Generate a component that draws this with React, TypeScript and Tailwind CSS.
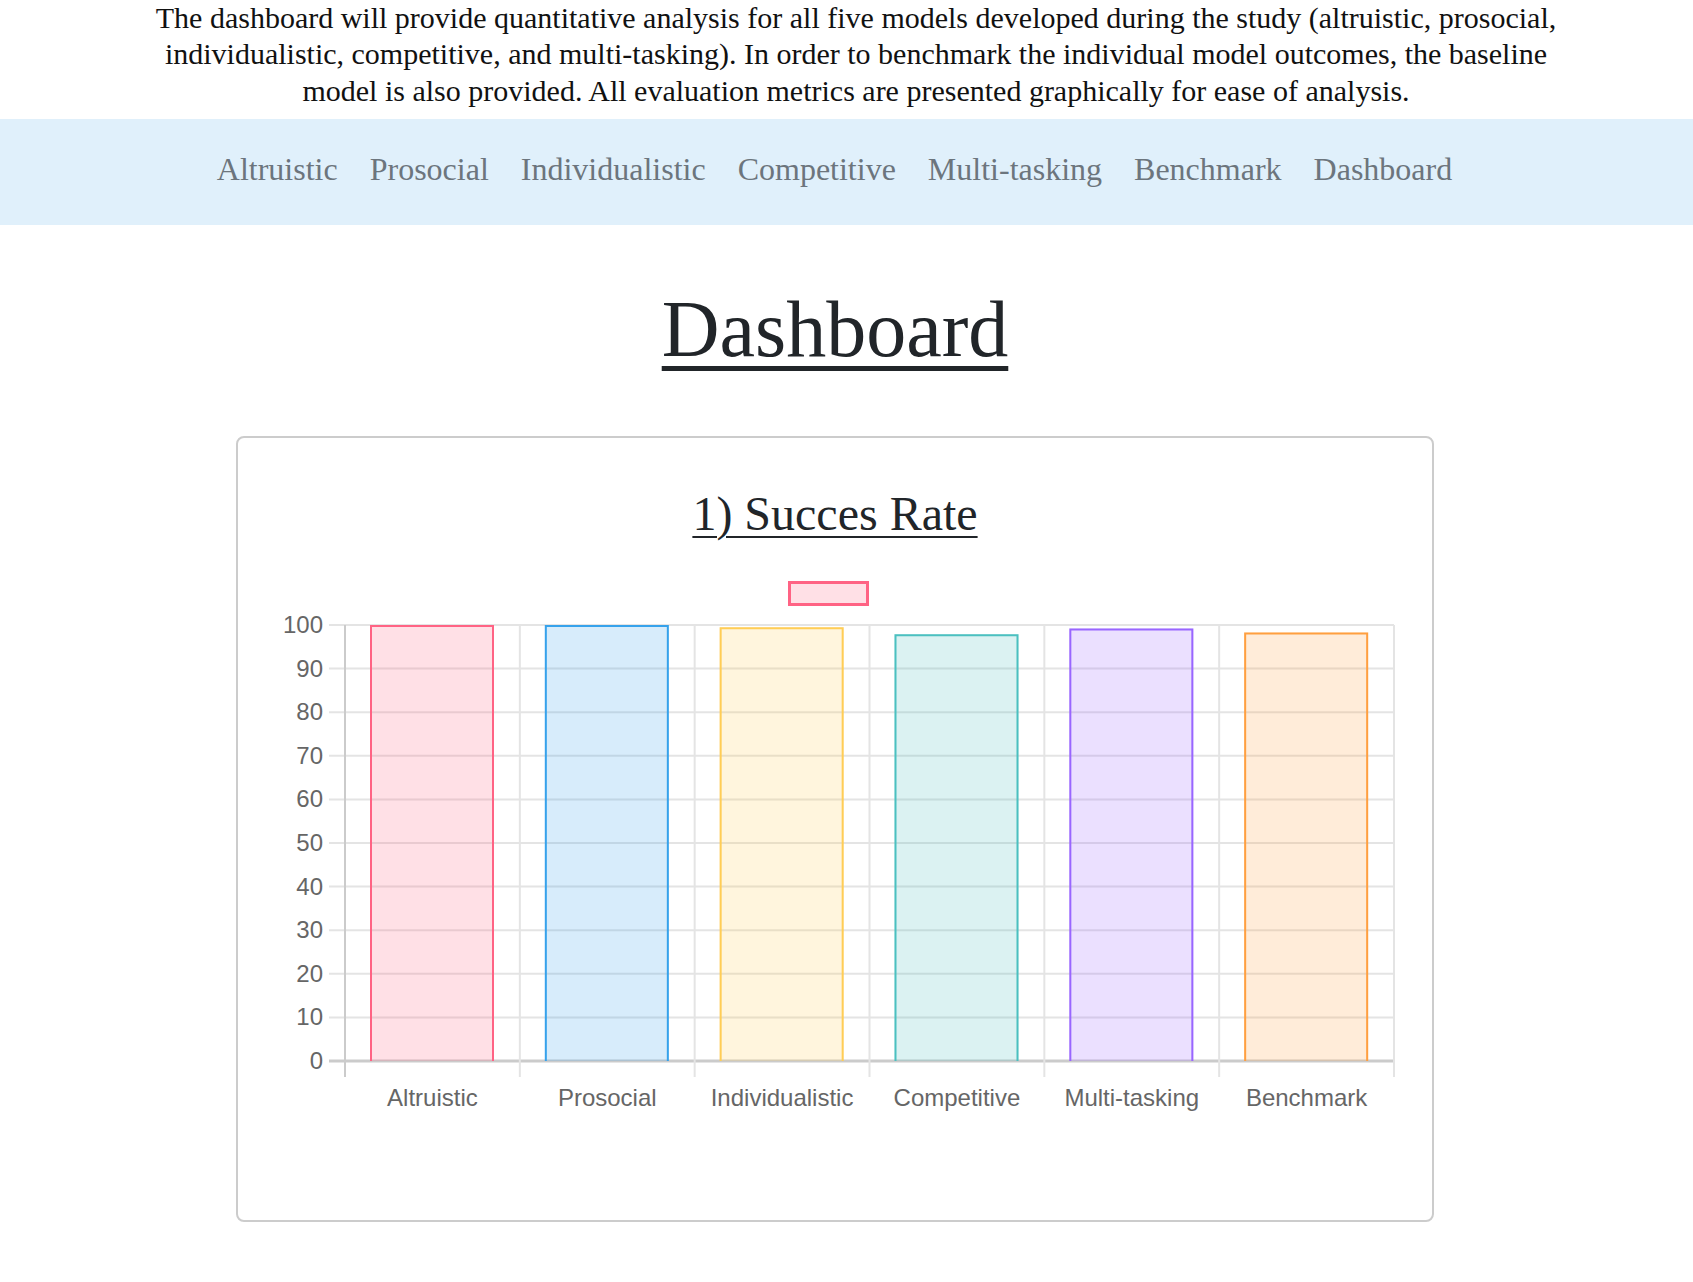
import React from 'react'

const models = [
  { name: 'Altruistic', value: 100, stroke: 'rgb(255,99,132)', fill: 'rgba(255,99,132,0.2)' },
  { name: 'Prosocial', value: 100, stroke: 'rgb(54,162,235)', fill: 'rgba(54,162,235,0.2)' },
  { name: 'Individualistic', value: 99.5, stroke: 'rgb(255,205,86)', fill: 'rgba(255,205,86,0.2)' },
  { name: 'Competitive', value: 97.9, stroke: 'rgb(75,192,192)', fill: 'rgba(75,192,192,0.2)' },
  { name: 'Multi-tasking', value: 99.2, stroke: 'rgb(153,102,255)', fill: 'rgba(153,102,255,0.2)' },
  { name: 'Benchmark', value: 98.3, stroke: 'rgb(255,159,64)', fill: 'rgba(255,159,64,0.2)' },
]

const navItems = ['Altruistic', 'Prosocial', 'Individualistic', 'Competitive', 'Multi-tasking', 'Benchmark', 'Dashboard']

// chart geometry, in svg coordinates
const left = 107
const right = 1156
const top = 55
const bottom = 491
const colW = (right - left) / 6
const yOf = (v: number) => bottom - (v / 100) * (bottom - top)

function SuccessChart() {
  return (
    <svg width={1194} height={560} className="block" style={{ fontFamily: '"Liberation Sans", Arial, sans-serif' }}>
      <rect x={551.5} y={12.5} width={78} height={22} fill="rgba(255,99,132,0.2)" stroke="rgb(255,99,132)" strokeWidth={3} />

      {Array.from({ length: 11 }).map((_, i) => {
        const y = yOf(i * 10)
        return (
          <g key={i}>
            <line x1={left - 16} x2={right} y1={y} y2={y} stroke={i === 0 ? '#cbcbcb' : '#e4e4e4'} strokeWidth={i === 0 ? 3 : 2} />
            <text x={85} y={y + 8} textAnchor="end" fontSize={24} fill="#666">
              {i * 10}
            </text>
          </g>
        )
      })}

      {Array.from({ length: 7 }).map((_, j) => {
        const x = left + j * colW
        return <line key={j} x1={x} x2={x} y1={top} y2={bottom + 16} stroke={j === 0 ? '#cbcbcb' : '#e4e4e4'} strokeWidth={2} />
      })}

      {models.map((m, j) => {
        const x = left + j * colW + 25
        const y = yOf(m.value)
        return (
          <g key={m.name}>
            <rect x={x} y={y} width={124} height={bottom - y} fill={m.fill} />
            <path d={`M${x + 1} ${bottom} V${y + 1} H${x + 123} V${bottom}`} fill="none" stroke={m.stroke} strokeWidth={2} />
            <text x={left + j * colW + colW / 2} y={536} textAnchor="middle" fontSize={24} fill="#666">
              {m.name}
            </text>
          </g>
        )
      })}
    </svg>
  )
}

export default function App() {
  return (
    <div className="min-h-screen bg-white" style={{ fontFamily: '"Liberation Serif", "Times New Roman", serif' }}>
      <p className="pl-[19px] text-center text-[30px] leading-[36.3px] text-[#111]">
        The dashboard will provide quantitative analysis for all five models developed during the study (altruistic, prosocial,
        <br />
        individualistic, competitive, and multi-tasking). In order to benchmark the individual model outcomes, the baseline
        <br />
        model is also provided. All evaluation metrics are presented graphically for ease of analysis.
      </p>

      <nav className="mt-[10px] flex h-[106px] items-center justify-center gap-[32px] bg-[#e0f0fb] pr-[24px] pb-[6px]">
        {navItems.map((item) => (
          <a key={item} href="#" className="text-[32px] leading-none text-[#6c757d]">
            {item}
          </a>
        ))}
      </nav>

      <div className="flex flex-col items-center pr-[23px]">
        <h1 className="mt-[56px] text-[80px] leading-[96px] text-[#212529] underline decoration-[5px] underline-offset-[10px]">
          Dashboard
        </h1>

        <div className="mt-[59px] flex h-[786px] w-[1198px] flex-col items-center rounded-lg border-2 border-[#cccccc] pt-[47px]">
          <h2 className="text-[48px] leading-[57.6px] text-[#212529] underline decoration-2 underline-offset-[6px]">1) Succes Rate</h2>
          <div className="mt-[28px] self-stretch">
            <SuccessChart />
          </div>
        </div>
      </div>
      <div className="h-[60px]" />
    </div>
  )
}
